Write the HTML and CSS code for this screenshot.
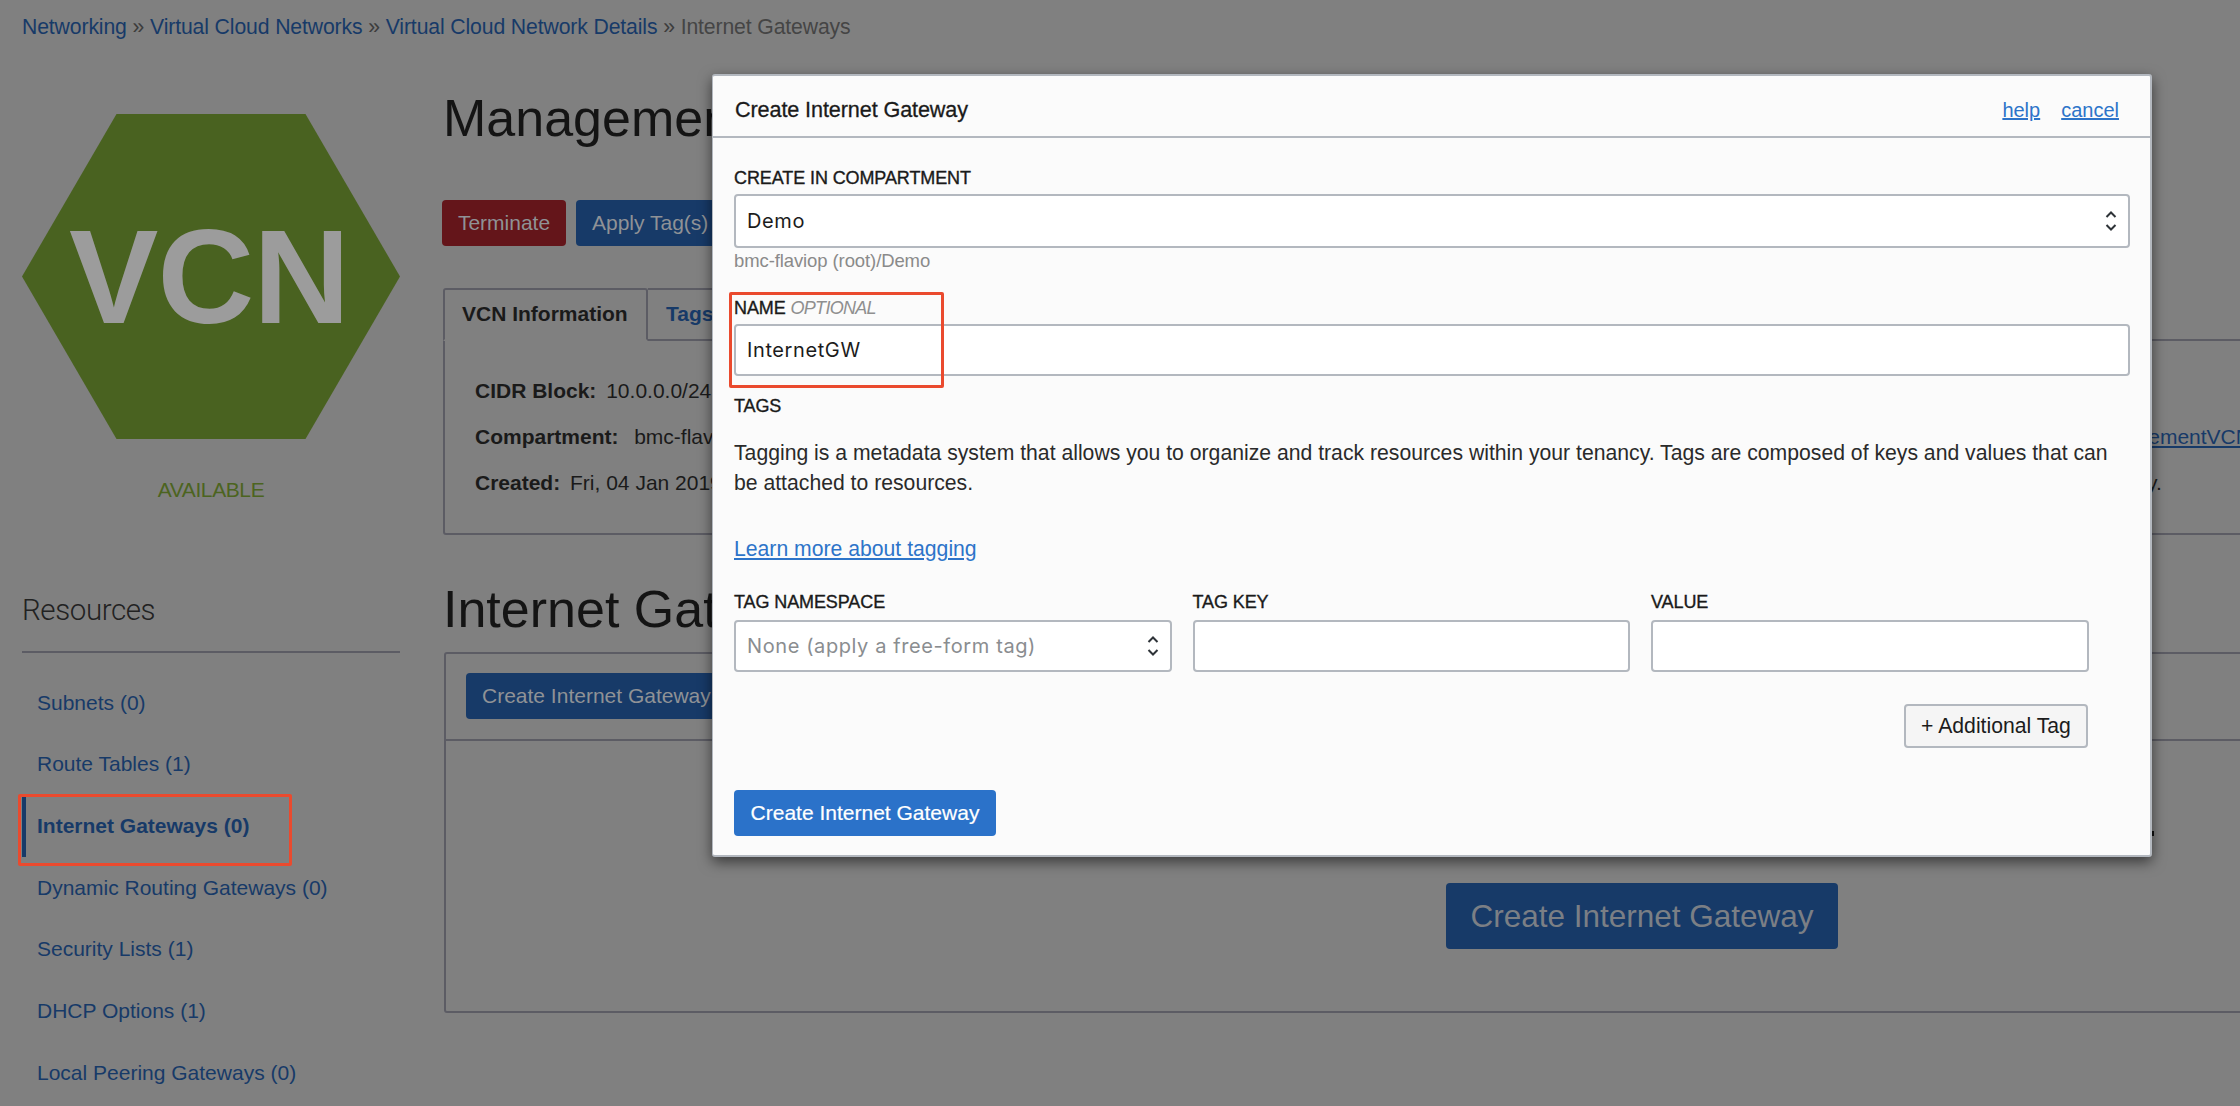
FILE: index.html
```html
<!DOCTYPE html>
<html lang="en">
<head>
<meta charset="utf-8">
<title>Create Internet Gateway</title>
<link rel="stylesheet" href="styles.css">
</head>
<body>
  <div class="breadcrumb">
    <a href="#">Networking</a> <span class="sep">»</span>
    <a href="#">Virtual Cloud Networks</a> <span class="sep">»</span>
    <a href="#">Virtual Cloud Network Details</a> <span class="sep">»</span>
    <span class="current">Internet Gateways</span>
  </div>

  <div class="layout">
    <aside class="sidebar">
      <div class="hexagon">VCN</div>
      <div class="status">AVAILABLE</div>
      <h3 class="resources-title">Resources</h3>
      <ul class="resources">
        <li><a href="#">Subnets (0)</a></li>
        <li><a href="#">Route Tables (1)</a></li>
        <li class="active"><a href="#">Internet Gateways (0)</a></li>
        <li><a href="#">Dynamic Routing Gateways (0)</a></li>
        <li><a href="#">Security Lists (1)</a></li>
        <li><a href="#">DHCP Options (1)</a></li>
        <li><a href="#">Local Peering Gateways (0)</a></li>
      </ul>
    </aside>

    <main class="content">
      <h1 class="page-title">ManagementVCN</h1>
      <div class="actions">
        <button class="btn btn-danger" type="button">Terminate</button>
        <button class="btn btn-primary" type="button">Apply Tag(s)</button>
      </div>

      <div class="tabs">
        <div class="tab tab-active">VCN Information</div>
        <div class="tab"><a href="#">Tags</a></div>
      </div>
      <div class="tab-panel">
        <div class="info">
          <div><b>CIDR Block:</b> 10.0.0.0/24</div>
          <div><b>Compartment:</b> &nbsp;bmc-flaviop (root)/Demo</div>
          <div><b>Created:</b> Fri, 04 Jan 2019 14:22:08 GMT</div>
        </div>
        <div class="info info-right">
          <div>&nbsp;</div>
          <div><a class="underlined" href="#">ManagementVCN</a></div>
          <div>tenancy.</div>
        </div>
      </div>

      <h2 class="section-title">Internet Gateways</h2>
      <div class="list-panel">
        <div class="toolbar">
          <button class="btn btn-primary btn-toolbar" type="button">Create Internet Gateway</button>
        </div>
        <div class="empty">
          <button class="btn btn-primary btn-big" type="button">Create Internet Gateway</button>
        </div>
      </div>
    </main>
  </div>

  <div class="callout callout-menu"></div>
  <div class="tick"></div>

  <div class="modal">
    <div class="modal-header">
      <span class="modal-title">Create Internet Gateway</span>
      <span class="modal-links"><a href="#">help</a><a href="#">cancel</a></span>
    </div>
    <div class="modal-body">
      <label class="label label-first">CREATE IN COMPARTMENT</label>
      <div class="field field-tall">
        <span>Demo</span>
        <svg class="updown" viewBox="0 0 12 24" width="12" height="24"><path d="M1.5 8 6 3.5 10.5 8M1.5 16 6 20.5 10.5 16"/></svg>
      </div>
      <div class="hint">bmc-flaviop (root)/Demo</div>

      <label class="label label-name">NAME <i>OPTIONAL</i></label>
      <div class="field"><span>InternetGW</span></div>

      <label class="label label-tags">TAGS</label>
      <p class="tags-text">Tagging is a metadata system that allows you to organize and track resources within your tenancy. Tags are composed of keys and values that can be attached to resources.</p>
      <a class="learn" href="#">Learn more about tagging</a>

      <div class="tag-grid">
        <div>
          <label class="label">TAG NAMESPACE</label>
          <div class="field">
            <span class="muted">None (apply a free-form tag)</span>
            <svg class="updown" viewBox="0 0 12 24" width="12" height="24"><path d="M1.5 8 6 3.5 10.5 8M1.5 16 6 20.5 10.5 16"/></svg>
          </div>
        </div>
        <div>
          <label class="label">TAG KEY</label>
          <div class="field"></div>
        </div>
        <div>
          <label class="label">VALUE</label>
          <div class="field"></div>
        </div>
      </div>

      <div class="tag-actions">
        <button class="btn btn-default" type="button">+ Additional Tag</button>
      </div>

      <button class="btn btn-submit" type="button">Create Internet Gateway</button>
    </div>
    <div class="callout callout-name"></div>
  </div>
</body>
</html>
```

FILE: styles.css
```css
html, body {
  margin: 0;
  height: 1106px;
  overflow: hidden;
}

body {
  position: relative;
  background: #808080;
  color: #1a1a1a;
  font-family: "Liberation Sans", Arial, sans-serif;
  font-size: 21px;
}

a {
  color: #173a68;
  text-decoration: none;
}

/* top of page */
.breadcrumb {
  padding: 15px 22px 0;
  font-size: 21.2px;
  line-height: 24px;
  letter-spacing: -0.12px;
  color: #333;
}
.breadcrumb .sep {
  color: #3c3c3c;
}
.breadcrumb .current {
  color: #454545;
}

.layout {
  display: flex;
  margin-top: 75px;
}

/* left column */
.sidebar {
  flex: none;
  width: 378px;
  margin-left: 22px;
}
.hexagon {
  box-sizing: border-box;
  height: 325px;
  padding-right: 4px;
  background: #496220;
  clip-path: polygon(25% 0, 75% 0, 100% 50%, 75% 100%, 25% 100%, 0 50%);
  display: flex;
  align-items: center;
  justify-content: center;
  color: #9c9c9c;
  font-size: 134px;
  font-weight: bold;
  letter-spacing: -1px;
}
.status {
  margin-top: 39px;
  text-align: center;
  color: #4c6420;
  font-size: 21px;
  line-height: 24px;
  letter-spacing: -0.4px;
}
.resources-title {
  margin: 91px 0 0;
  padding-bottom: 24px;
  border-bottom: 2px solid #5c5c64;
  font-family: "Roboto", "Liberation Sans", sans-serif;
  font-size: 29.5px;
  font-weight: 300;
  line-height: 34px;
  color: #222;
  letter-spacing: -0.4px;
}
.resources {
  list-style: none;
  margin: 19px 0 0;
  padding: 0;
}
.resources li {
  height: 61.67px;
  display: flex;
  align-items: center;
  padding-left: 11px;
  border-left: 4px solid transparent;
  box-sizing: border-box;
}
.resources li.active {
  border-left-color: #173a68;
  font-weight: bold;
}

/* main column, runs past the edge of the window */
.content {
  flex: none;
  width: 2398px;
  margin-left: 42px;
}
.page-title,
.section-title {
  margin: 0 0 0 1px;
  font-size: 52px;
  font-weight: normal;
  line-height: 60px;
  color: #141414;
}
.page-title {
  margin-top: -26px;
}
.actions {
  display: flex;
  gap: 10px;
  margin-top: 52px;
}

.btn {
  border: 0;
  border-radius: 4px;
  font-family: inherit;
  font-size: 21px;
  color: #8f9296;
}
.btn-danger {
  width: 124px;
  height: 46px;
  background: #64151a;
  padding: 0;
}
.btn-primary {
  background: #173a68;
}
.actions .btn-primary {
  width: 190px;
  height: 46px;
  padding: 0 0 0 16px;
  text-align: left;
}
.btn-toolbar {
  height: 46px;
  width: 262px;
  padding: 0 0 0 16px;
  text-align: left;
  white-space: nowrap;
}
.btn-big {
  width: 392px;
  height: 66px;
  font-size: 31.5px;
  color: #7b7f85;
}

/* tabs */
.tabs {
  display: flex;
  margin: 42px 0 -2px 1px;
  position: relative;
}
.tab {
  box-sizing: border-box;
  height: 53px;
  padding: 0 18px;
  line-height: 48px;
  font-weight: bold;
  border: 2px solid #5c5c64;
  border-left: 0;
  border-radius: 0 3px 0 0;
}
.tab-active {
  width: 205px;
  padding: 0 17px;
  border-left: 2px solid #5c5c64;
  border-bottom-color: #808080;
  border-radius: 3px 3px 0 0;
}
.tab-panel {
  box-sizing: border-box;
  display: flex;
  justify-content: space-between;
  height: 196px;
  margin-left: 1px;
  border: 2px solid #5c5c64;
  border-radius: 0 0 0 3px;
  padding: 27px 0 0 30px;
}
.info div {
  height: 46px;
  line-height: 46px;
  white-space: nowrap;
}
.info b {
  margin-right: 4px;
}
.info-right {
  flex: none;
  width: 754px;
}
.underlined {
  text-decoration: underline;
}

/* internet gateways list */
.section-title {
  margin-top: 44px;
}
.list-panel {
  box-sizing: border-box;
  height: 361px;
  margin: 13px 0 0 2px;
  border: 2px solid #5c5c64;
  border-radius: 3px;
}
.toolbar {
  box-sizing: border-box;
  height: 87px;
  padding: 19px 20px;
  border-bottom: 2px solid #5c5c64;
}
.empty {
  display: flex;
  justify-content: center;
  padding-top: 142px;
}

/* dialog */
.modal {
  position: absolute;
  left: 712px;
  top: 74px;
  width: 1440px;
  height: 783px;
  box-sizing: border-box;
  background: #fbfbfb;
  border: 2px solid #b3b8bf;
  border-left-width: 1px;
  border-radius: 3px;
  box-shadow: 0 5px 14px rgba(0, 0, 0, 0.55);
}
.modal-header {
  display: flex;
  justify-content: space-between;
  align-items: center;
  box-sizing: border-box;
  height: 62px;
  padding: 8px 31px 0 22px;
  border-bottom: 2px solid #b3b8bf;
}
.modal-title {
  font-size: 21.6px;
  -webkit-text-stroke: 0.3px #1a1a1a;
  letter-spacing: -0.1px;
}
.modal-links {
  display: flex;
  gap: 21px;
}
.modal-links a,
.learn {
  color: #2d74c9;
  text-decoration: underline;
}
.modal-links a {
  font-size: 20px;
}
.modal-body {
  padding: 0 20px 0 21px;
}
.label {
  display: block;
  font-size: 18px;
  line-height: 22px;
  letter-spacing: -0.1px;
  -webkit-text-stroke: 0.35px #1a1a1a;
}
.label i {
  color: #8f8f8f;
  font-weight: normal;
  -webkit-text-stroke: 0;
  letter-spacing: -0.7px;
}
.label-first {
  margin-top: 29px;
  margin-bottom: 5px;
}
.label-name {
  margin: 25px 0 5px;
}
.label-tags {
  margin-top: 19px;
}
.field {
  box-sizing: border-box;
  height: 52px;
  display: flex;
  align-items: center;
  justify-content: space-between;
  padding: 0 11px 0 11px;
  background: #fff;
  border: 2px solid #b3b8bf;
  border-radius: 4px;
  font-family: "Inter", "Liberation Sans", sans-serif;
  font-size: 20px;
  letter-spacing: 0.6px;
  color: #1c1c1c;
}
.field-tall {
  height: 54px;
}
.updown {
  fill: none;
  stroke: #2e3338;
  stroke-width: 2;
}
.muted {
  color: #8a8d90;
}
.hint {
  margin-top: 2px;
  font-size: 18.5px;
  line-height: 22px;
  color: #8a8a8a;
  letter-spacing: -0.1px;
}
.tags-text {
  margin: 21px 0 0;
  font-size: 21.2px;
  line-height: 30px;
  color: #2a2a2a;
  width: 1385px;
}
.learn {
  display: block;
  margin-top: 36px;
  font-size: 21.2px;
  line-height: 30px;
}
.tag-grid {
  display: grid;
  grid-template-columns: 437.5px 437.5px 437.5px;
  gap: 21px;
  margin-top: 27px;
}
.tag-grid .label {
  margin-bottom: 7px;
}
.tag-actions {
  display: flex;
  justify-content: flex-end;
  width: 1354px;
  margin-top: 32px;
}
.btn-default {
  width: 184px;
  height: 44px;
  background: #f5f5f5;
  border: 2px solid #b3b8bf;
  color: #1c1c1c;
  font-size: 21.2px;
  padding: 0;
}
.btn-submit {
  display: block;
  width: 262px;
  height: 46px;
  margin-top: 42px;
  background: #2b72c9;
  color: #fff;
  font-size: 21px;
  padding: 0;
  -webkit-text-stroke: 0.2px #fff;
}

/* red annotation boxes drawn on top of the screenshot */
.callout {
  position: absolute;
  box-sizing: border-box;
  border: 3px solid #ea4a2e;
  border-radius: 2px;
}
.callout-menu {
  left: 18px;
  top: 794px;
  width: 274px;
  height: 72px;
}
.callout-name {
  left: 16px;
  top: 216px;
  width: 215px;
  height: 96px;
}
.tick {
  position: absolute;
  left: 2152px;
  top: 831px;
  width: 2px;
  height: 5px;
  background: #111;
}
```
